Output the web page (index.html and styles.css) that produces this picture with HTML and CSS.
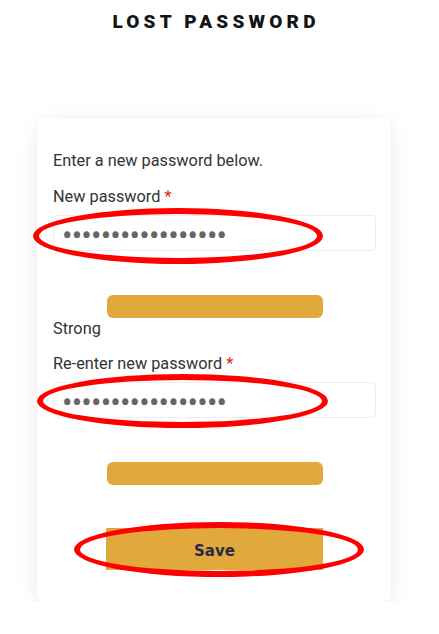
FILE: index.html
```html
<!DOCTYPE html>
<html>
<head>
<meta charset="utf-8">
<link rel="stylesheet" href="styles.css">
</head>
<body>
<div class="page">
  <h1 class="title">LOST PASSWORD</h1>
  <form class="card">
    <p class="intro">Enter a new password below.</p>
    <label class="label">New password <span class="req">*</span></label>
    <div class="field">
      <input class="input" type="password" value="abcdefghijklmnopq">
      <span class="ring ring-1"></span>
    </div>
    <div class="bar bar-1"></div>
    <div class="strength">Strong</div>
    <label class="label">Re-enter new password <span class="req">*</span></label>
    <div class="field">
      <input class="input" type="password" value="abcdefghijklmnopq">
      <span class="ring ring-2"></span>
    </div>
    <div class="bar bar-2"></div>
    <div class="save-wrap">
      <button type="button" class="save">Save</button>
      <span class="ring ring-3"></span>
    </div>
  </form>
</div>
</body>
</html>
```

FILE: styles.css
```css
* { box-sizing: border-box; }
html, body { margin: 0; padding: 0; background: #fff; }
body {
  font-family: Roboto, "Liberation Sans", sans-serif;
  color: #333;
  font-size: 16px;
  line-height: 24px;
}
.page {
  width: 354px;
  margin-left: 37px;
  padding-top: 10px;
}
.title {
  margin: 0;
  font-size: 19px;
  line-height: 24px;
  font-weight: 900;
  letter-spacing: 4.2px;
  text-align: center;
  color: #141414;
  padding-left: 4px;
}
.card {
  margin-top: 84px;
  background: #fff;
  border-radius: 8px;
  box-shadow: 0 6px 24px rgba(0,0,0,0.07), 0 0 6px rgba(0,0,0,0.03);
  padding: 31px 15px 32px 16px;
  display: flex;
  flex-direction: column;
}
.intro { margin: 0 0 12px; font-size: 16.3px; }
.label { display: block; margin-bottom: 6px; font-size: 16.3px; }
.strength { margin-bottom: 11px; font-size: 16.3px; }
.req { color: #e2231a; }
.field { position: relative; }
.input {
  display: block;
  width: 100%;
  height: 36px;
  border: 1px solid #eeeeee;
  border-radius: 4px;
  padding: 4px 8px 0;
  font-family: Roboto, "Liberation Sans", sans-serif;
  font-size: 31px;
  line-height: 30px;
  color: #666;
  letter-spacing: -0.8px;
  background: #fff;
  outline: none;
}
.bar {
  align-self: center;
  width: 216px;
  height: 23px;
  border-radius: 6px;
  background: #e1a83c;
  margin-top: 44px;
}
.bar-1 { margin-bottom: -1px; }
.save-wrap {
  position: relative;
  align-self: center;
  margin-top: 43px;
}
.save {
  display: block;
  width: 217px;
  height: 42px;
  border: 0;
  border-radius: 0;
  padding: 4px 0 0;
  background: #e1a83c;
  color: #2a2a45;
  font-family: "DejaVu Sans", Verdana, sans-serif;
  font-weight: bold;
  font-size: 15px;
}
.ring {
  position: absolute;
  border: 6px solid #ff0000;
  border-radius: 50%;
  pointer-events: none;
}
.ring-1 { left: -20px; top: -7px; width: 290px; height: 56px; }
.ring-2 { left: -16px; top: -8px; width: 291px; height: 54px; }
.ring-3 { left: -32px; top: -6px; width: 290px; height: 55px; }
```
